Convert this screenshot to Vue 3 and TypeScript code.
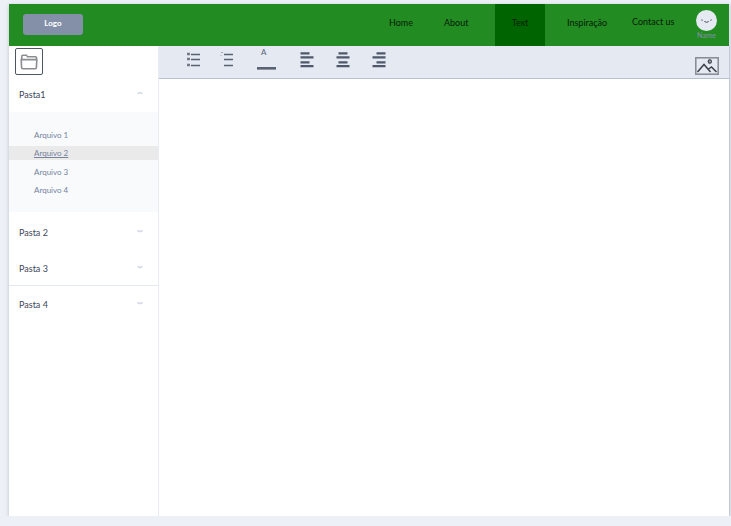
<script setup lang="ts">
import { ref } from 'vue'

interface Folder { name: string; open: boolean; files: string[] }

const links: { label: string; key: string }[] = [
  { label: 'Home', key: 'home' },
  { label: 'About', key: 'about' },
  { label: 'Text', key: 'text' },
  { label: 'Inspiração', key: 'inspiration' },
  { label: 'Contact us', key: 'contact' },
]
const page = ref('text')
const selected = ref('Arquivo 2')
const folders = ref<Folder[]>([
  { name: 'Pasta1', open: true, files: ['Arquivo 1', 'Arquivo 2', 'Arquivo 3', 'Arquivo 4'] },
  { name: 'Pasta 2', open: false, files: [] },
  { name: 'Pasta 3', open: false, files: [] },
  { name: 'Pasta 4', open: false, files: [] },
])
</script>

<template>
  <div class="window">
    <header class="header">
      <div class="logo">Logo</div>
      <nav class="nav">
        <a v-for="l in links" :key="l.key" :class="['link', l.key, { active: page === l.key }]" @click="page = l.key"><span>{{ l.label }}</span></a>
      </nav>
      <div class="user">
        <svg class="avatar" width="21" height="21" viewBox="0 0 21 21">
          <circle cx="10.5" cy="10.5" r="10.5" fill="#e4e9f2" />
          <path d="M5.300 9.800l1.400.6M15.700 9.800l-1.400.6M8.500 11c.2 1.700 3.800 1.700 4 0" fill="none" stroke="#4a4e57" stroke-width="1" />
        </svg>
        <span class="name">Name</span>
      </div>
    </header>
    <div class="body">
      <aside class="sidebar">
        <div class="tools">
          <button class="new-folder">
            <svg width="18" height="16" viewBox="0 0 18 16" fill="none" stroke="#8b8d90" stroke-width="1.6">
              <path d="M1.800 5.500V2q0-.8.8-.8h3.900l1 1.600h8q1 0 1 1v2M1.200 5.600h15.600l-.4 8q-.1 1.100-1.200 1.100H2.800q-1.100 0-1.200-1.100z" />
            </svg>
          </button>
        </div>
        <section v-for="f in folders" :key="f.name" class="folder">
          <div class="row" @click="f.open = !f.open">
            <span>{{ f.name }}</span>
            <svg class="chevron" width="6" height="4" viewBox="0 0 6 4">
              <path :d="f.open ? 'M.5 2.700L3 1.500l2.500 1.200' : 'M.5 1.500L3 2.700 5.500 1.500'" fill="none" stroke="#d0d8e4" stroke-width="1.400" />
            </svg>
          </div>
          <ul v-if="f.open" class="files">
            <li v-for="file in f.files" :key="file" :class="{ selected: file === selected }" @click="selected = file">{{ file }}</li>
          </ul>
        </section>
      </aside>
      <main class="editor">
        <div class="toolbar">
          <svg class="bullets" width="14" height="15" viewBox="0 0 14 15">
            <path d="M0 2h3M0 7h3M0 13h3" stroke="#747c8b" stroke-width="2.400" />
            <path d="M4 2.500h9M4 7.500h9M4 13.500h9" stroke="#586172" stroke-width="1.600" />
          </svg>
          <svg class="numbers" width="14" height="16" viewBox="0 0 14 16">
            <path d="M1 1.500h2M.5 4.500h1" stroke="#a4abb8" stroke-width="1" />
            <path d="M4 3.500h9M4 8.500h9M4 14.500h9" stroke="#586172" stroke-width="1.600" />
          </svg>
          <div class="color"><span>A</span><i></i></div>
          <svg class="align left" width="14" height="16" viewBox="0 0 14 16"><path d="M.5 1.300h9M.5 5.300h13M.5 10.300h9M.5 14.200h13" /></svg>
          <svg class="align center" width="14" height="16" viewBox="0 0 14 16"><path d="M2.500 1.300h9M.5 5.300h13M2.500 10.300h9M.5 14.200h13" /></svg>
          <svg class="align right" width="14" height="16" viewBox="0 0 14 16"><path d="M4.500 1.300h9M.5 5.300h13M4.500 10.300h9M.5 14.200h13" /></svg>
          <svg class="image" width="24" height="18" viewBox="0 0 24 18" fill="none">
            <rect x=".8" y=".8" width="22.400" height="16.400" stroke="#858a92" stroke-width="1.500" />
            <path d="M2.500 15l6.500-7.500 6.500 7.500M13.500 12l3-2 5 5" stroke="#3d4045" stroke-width="1.500" />
            <circle cx="14.800" cy="4.500" r="1.600" stroke="#3d4045" stroke-width="1.200" />
            <path d="M14.800 1.800v5.400" stroke="#5d6167" stroke-width=".8" />
          </svg>
        </div>
        <div class="page" contenteditable="true"></div>
      </main>
    </div>
  </div>
</template>

<style>
body { background: #edf1f7; overflow: hidden; }
</style>

<style scoped>
* { box-sizing: border-box; }
.window {
  width: 721px;
  height: 512px;
  margin: 4px 0 0 9px;
  display: flex;
  flex-direction: column;
  background: #fff;
  font-family: Lato, sans-serif;
  font-size: 9px;
  box-shadow: 0 1px 4px rgba(80, 95, 125, .32);
}
.header { height: 42px; flex: none; display: flex; background: #228b22; border-right: 1px solid #dce1ea; }
.logo {
  width: 60px;
  height: 21px;
  margin: 10px 0 0 14px;
  border-radius: 3px;
  background: #8390a8;
  color: #fff;
  font-size: 8px;
  font-weight: 700;
  line-height: 18px;
  text-align: center;
}
.nav { margin-left: auto; display: flex; color: #071a07; line-height: 38px; }
.link { white-space: nowrap; }
.home { width: 55px; }
.about { width: 51px; }
.text { width: 50px; text-align: center; }
.inspiration { width: 87px; padding-left: 22px; }
.contact { width: 64px; line-height: 36px; }
.active { background: #006400; }
.user { width: 21px; margin: 6px 12px 0 0; display: flex; flex-direction: column; align-items: center; }
.avatar { display: block; flex: none; }
.name { color: #8390a8; font-size: 7.300px; line-height: 10px; }
.body { flex: 1; display: flex; min-height: 0; }
.sidebar { width: 150px; flex: none; border-right: 1px solid #e9ecf3; color: #3c4657; }
.tools { height: 31px; padding: 2px 0 0 6px; }
.new-folder {
  width: 28px;
  height: 27px;
  padding: 0;
  display: flex;
  align-items: center;
  justify-content: center;
  border: 1px solid #4d5665;
  border-radius: 2px;
  background: #fff;
}
.row { height: 36px; padding: 0 15px 0 10px; display: flex; align-items: center; justify-content: space-between; }
.folder:first-of-type .row { height: 35px; }
.folder:nth-of-type(2) .row { height: 39px; padding-top: 2px; }
.folder:nth-of-type(3) .row { height: 35px; border-bottom: 1px solid #e4e8f1; }
.folder:nth-of-type(4) .row { height: 37px; }
.chevron { margin-bottom: 3px; }
.files { height: 100px; margin: 0; padding: 16px 0 0; list-style: none; background: #f8fafc; color: #75839c; font-size: 8px; }
.files li { height: 14px; margin-bottom: 4.400px; padding-left: 25px; line-height: 14px; }
.files .selected { background: #eaeaea; text-decoration: underline; }
.editor { flex: 1; display: flex; flex-direction: column; border-right: 1px solid #c4cad8; }
.toolbar { height: 33px; flex: none; display: flex; align-items: flex-start; background: #e4e9f2; border-bottom: 1px solid #b9c1d0; }
.bullets { margin: 6px 0 0 28px; }
.numbers { margin: 5px 0 0 19px; }
.color { width: 19px; margin: 1px 0 0 23px; display: flex; flex-direction: column; color: #596273; font-size: 8px; line-height: 10px; }
.color span { padding-left: 4px; }
.color i { width: 19px; height: 3px; margin-top: 10px; background: #596273; border: solid #8d95a3; border-width: 0 0 1px; }
.align { stroke: #4f596a; stroke-width: 2.300; }
.left { margin: 6px 0 0 24px; }
.center, .right { margin: 6px 0 0 22px; }
.image { margin: 11px 10px 0 auto; }
.page { flex: 1; outline: none; }
</style>
